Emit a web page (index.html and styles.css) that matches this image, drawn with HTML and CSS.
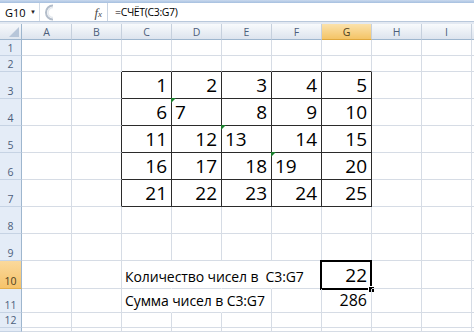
FILE: index.html
```html
<!DOCTYPE html>
<html>
<head>
<meta charset="utf-8">
<link rel="stylesheet" href="styles.css">
</head>
<body>
<div class="app">
  <div class="strip"></div>
  <div class="fbar">
    <div class="namebox"><span>G10</span><span class="arrow">▼</span></div>
    <div class="mid">
      <svg class="grip" width="12" height="17" viewBox="0 0 12 17"><path d="M11 1.5 A7 7 0 0 0 11 15.5" fill="none" stroke="#b3bdca" stroke-width="2"/><path d="M11 3.5 A5 5 0 0 0 11 13.5" fill="none" stroke="#e6eaef" stroke-width="1.5"/></svg>
      <span class="fx"><i>f</i><span class="x">x</span></span>
    </div>
    <div class="formula">=СЧЁТ(C3:G7)</div>
  </div>
  <div class="gap"></div>
  <div class="sheet">
    <div class="corner"></div><div class="h">A</div><div class="h">B</div><div class="h">C</div><div class="h">D</div><div class="h">E</div><div class="h">F</div><div class="h hs">G</div><div class="h">H</div><div class="h">I</div><div class="h"></div>

    <div class="r">1</div><div class="c"></div><div class="c"></div><div class="c"></div><div class="c"></div><div class="c"></div><div class="c"></div><div class="c"></div><div class="c"></div><div class="c"></div><div class="c"></div>

    <div class="r">2</div><div class="c"></div><div class="c"></div><div class="c kb"></div><div class="c kb"></div><div class="c kb"></div><div class="c kb"></div><div class="c kb"></div><div class="c"></div><div class="c"></div><div class="c"></div>

    <div class="r">3</div><div class="c"></div><div class="c kr"></div><div class="c k">1</div><div class="c k">2</div><div class="c k">3</div><div class="c k">4</div><div class="c k">5</div><div class="c"></div><div class="c"></div><div class="c"></div>

    <div class="r">4</div><div class="c"></div><div class="c kr"></div><div class="c k">6</div><div class="c k s g">7</div><div class="c k">8</div><div class="c k">9</div><div class="c k">10</div><div class="c"></div><div class="c"></div><div class="c"></div>

    <div class="r">5</div><div class="c"></div><div class="c kr"></div><div class="c k">11</div><div class="c k">12</div><div class="c k s g">13</div><div class="c k">14</div><div class="c k">15</div><div class="c"></div><div class="c"></div><div class="c"></div>

    <div class="r">6</div><div class="c"></div><div class="c kr"></div><div class="c k">16</div><div class="c k">17</div><div class="c k">18</div><div class="c k s g">19</div><div class="c k">20</div><div class="c"></div><div class="c"></div><div class="c"></div>

    <div class="r">7</div><div class="c"></div><div class="c kr"></div><div class="c k">21</div><div class="c k">22</div><div class="c k">23</div><div class="c k">24</div><div class="c k">25</div><div class="c"></div><div class="c"></div><div class="c"></div>

    <div class="r">8</div><div class="c"></div><div class="c"></div><div class="c"></div><div class="c"></div><div class="c"></div><div class="c"></div><div class="c"></div><div class="c"></div><div class="c"></div><div class="c"></div>

    <div class="r">9</div><div class="c"></div><div class="c"></div><div class="c"></div><div class="c"></div><div class="c"></div><div class="c"></div><div class="c"></div><div class="c"></div><div class="c"></div><div class="c"></div>

    <div class="r rs">10</div><div class="c"></div><div class="c"></div><div class="c s t nr">Количество чисел в&nbsp; C3:G7</div><div class="c nr"></div><div class="c nr"></div><div class="c"></div><div class="c sel">22<span class="box"></span><span class="handle"></span></div><div class="c"></div><div class="c"></div><div class="c"></div>

    <div class="r">11</div><div class="c"></div><div class="c"></div><div class="c s t nr">Сумма чисел в C3:G7</div><div class="c nr"></div><div class="c"></div><div class="c"></div><div class="c m">286</div><div class="c"></div><div class="c"></div><div class="c"></div>

    <div class="r">12</div><div class="c"></div><div class="c"></div><div class="c"></div><div class="c"></div><div class="c"></div><div class="c"></div><div class="c"></div><div class="c"></div><div class="c"></div><div class="c"></div>

    <div class="r"></div><div class="c"></div><div class="c"></div><div class="c"></div><div class="c"></div><div class="c"></div><div class="c"></div><div class="c"></div><div class="c"></div><div class="c"></div><div class="c"></div>
  </div>
</div>
</body>
</html>
```

FILE: styles.css
```css
* { box-sizing: border-box; margin: 0; padding: 0; }
html, body { width: 474px; height: 332px; overflow: hidden; background: #fff; }
body { font-family: "Open Sans", "Noto Sans", sans-serif; color: #000; }

.app { display: flex; flex-direction: column; height: 332px; }

.strip { height: 3px; background: linear-gradient(#c9d9ee, #a6bfdf); }

.fbar {
  height: 19px;
  display: flex;
  align-items: stretch;
  background: #fff;
  border-bottom: 1px solid #b9c8db;
}
.namebox {
  width: 40px;
  display: flex;
  align-items: center;
  justify-content: space-between;
  padding: 0 3px 0 5px;
  font-size: 11px;
  border-right: 1px solid #d3dce7;
}
.arrow { font-size: 6px; color: #222; }
.mid {
  width: 67px;
  display: flex;
  align-items: center;
  justify-content: space-between;
  padding: 0 5px 0 2px;
}
.grip { display: block; }
.fx {
  font-family: "Liberation Serif", serif;
  font-size: 13px;
  color: #4a4a4a;
  line-height: 1;
}
.fx .x { font-size: 9px; font-style: italic; }
.formula {
  flex: 1;
  display: flex;
  align-items: center;
  padding-left: 7px;
  font-size: 10.5px;
  letter-spacing: -0.35px;
  border-left: 1px solid #c9d4e2;
}
.gap { height: 2px; background: #e3e9f2; }

.sheet {
  flex: 1;
  display: grid;
  grid-template-columns: 22px repeat(9, 50px) 1fr;
  grid-template-rows: 16px 16px 16px repeat(7, 27px) 28px 24px 15px 1fr;
  overflow: hidden;
}

.corner {
  position: relative;
  background: linear-gradient(#f6f8fb, #dfe6ef);
  border-right: 1px solid #9eb6ce;
  border-bottom: 1px solid #9eb6ce;
}
.corner::after {
  content: "";
  position: absolute;
  right: 2px;
  bottom: 2px;
  border-left: 10px solid transparent;
  border-bottom: 10px solid #b7c6d9;
}

.h {
  background: linear-gradient(#f8fafc, #dde4ee);
  border-right: 1px solid #c6d0dd;
  border-bottom: 1px solid #9eb6ce;
  display: flex;
  align-items: center;
  justify-content: center;
  padding-top: 1px;
  font-size: 10.5px;
  color: #4c5e7b;
}
.hs {
  background: linear-gradient(#fbe2ac, #f4c466);
  border-bottom-color: #e0a83e;
  color: #4e4020;
}

.r {
  background: #e4ecf7;
  border-right: 1px solid #9eb6ce;
  border-bottom: 1px solid #c6d3e4;
  display: flex;
  align-items: flex-end;
  justify-content: center;
  padding-bottom: 2px;
  font-size: 10.5px;
  line-height: 1;
  color: #4c5e7b;
}
.rs {
  background: linear-gradient(#fad99c, #f6c36a);
  border-bottom-color: #e4ae4b;
  color: #4e4020;
}

.c {
  position: relative;
  border-right: 1px solid #d6dce5;
  border-bottom: 1px solid #d6dce5;
  display: flex;
  align-items: flex-end;
  justify-content: flex-end;
  padding: 0 4px 3px;
  font-size: 19px;
  line-height: 1;
  white-space: nowrap;
}
.k { border-right-color: #2b2b2b; border-bottom-color: #2b2b2b; }
.kr { border-right-color: #2b2b2b; }
.kb { border-bottom-color: #2b2b2b; }
.nr { border-right-color: transparent; }

.s { justify-content: flex-start; padding-left: 3px; }
.t { font-size: 14px; padding-bottom: 4px; letter-spacing: -0.1px; }
.m { font-size: 16px; padding-bottom: 4px; }

.g::before {
  content: "";
  position: absolute;
  left: -1px;
  top: -1px;
  border-top: 5px solid #1a7f2e;
  border-right: 5px solid transparent;
}

.sel .box {
  position: absolute;
  left: -2px;
  top: -1px;
  right: -1px;
  bottom: -2px;
  border: 2px solid #000;
}
.sel .handle {
  position: absolute;
  right: -3px;
  bottom: -4px;
  width: 5px;
  height: 5px;
  background: #000;
  outline: 1px solid #fff;
}
```
